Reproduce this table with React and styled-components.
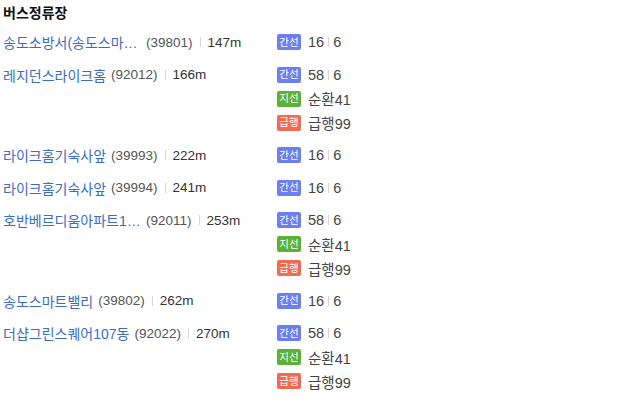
import React from "react";
import styled, { createGlobalStyle } from "styled-components";

const Global = createGlobalStyle`
  html, body { margin: 0; padding: 0; background: #fff; }
  body { font-family: "Liberation Sans", "Noto Sans CJK KR", sans-serif; }
`;

const Page = styled.div`
  padding: 0 3px;
  width: 632px;
`;

const Title = styled.h3`
  margin: 0 0 4px;
  height: 26px;
  line-height: 26px;
  font-size: 14px;
  font-weight: bold;
  color: #111;
`;

const List = styled.ul`
  list-style: none;
  margin: 0;
  padding: 0;
`;

const Stop = styled.li`
  display: grid;
  grid-template-columns: 274px 1fr;
  margin-bottom: 8.5px;
`;

const StopLine = styled.div`
  display: flex;
  align-items: center;
  height: 24px;
  font-size: 13.5px;
  white-space: nowrap;
`;

const Name = styled.a`
  display: block;
  max-width: 138px;
  overflow: hidden;
  text-overflow: ellipsis;
  white-space: nowrap;
  font-size: 14px;
  color: #3a6cc6;
  text-decoration: none;
  margin-right: 5px;
`;

const Code = styled.span`
  color: #555;
`;

const Sep = styled.span`
  display: inline-block;
  width: 1px;
  height: 10px;
  background: #d6d6d6;
  margin: 0 ${(p) => p.$gap || 6}px;
`;

const Dist = styled.span`
  color: #333;
`;

const Routes = styled.div`
  display: flex;
  flex-direction: column;
`;

const RouteLine = styled.div`
  display: flex;
  align-items: center;
  height: 24px;
  gap: 7px;
`;

const colors = { 간선: "#6c7ef0", 지선: "#5bb236", 급행: "#f06b50" };

const Badge = styled.span`
  display: inline-flex;
  align-items: center;
  justify-content: center;
  width: 24px;
  height: 16px;
  border-radius: 2px;
  background: ${(p) => colors[p.$kind]};
  color: #fff;
  font-size: 10.5px;
  font-family: "Noto Sans CJK KR", sans-serif;
  line-height: 1;
`;

const Nums = styled.span`
  display: flex;
  align-items: center;
  font-size: 14.5px;
  color: #444;
`;

const stops = [
  { name: "송도소방서(송도스마트밸리)", code: "39801", dist: "147m", routes: [["간선", ["16", "6"]]] },
  {
    name: "레지던스라이크홈",
    code: "92012",
    dist: "166m",
    routes: [["간선", ["58", "6"]], ["지선", ["순환41"]], ["급행", ["급행99"]]],
  },
  { name: "라이크홈기숙사앞", code: "39993", dist: "222m", routes: [["간선", ["16", "6"]]] },
  { name: "라이크홈기숙사앞", code: "39994", dist: "241m", routes: [["간선", ["16", "6"]]] },
  {
    name: "호반베르디움아파트1단지",
    code: "92011",
    dist: "253m",
    routes: [["간선", ["58", "6"]], ["지선", ["순환41"]], ["급행", ["급행99"]]],
  },
  { name: "송도스마트밸리", code: "39802", dist: "262m", routes: [["간선", ["16", "6"]]] },
  {
    name: "더샵그린스퀘어107동",
    code: "92022",
    dist: "270m",
    routes: [["간선", ["58", "6"]], ["지선", ["순환41"]], ["급행", ["급행99"]]],
  },
];

export default function App() {
  return (
    <Page>
      <Global />
      <Title>버스정류장</Title>
      <List>
        {stops.map((s, i) => (
          <Stop key={i}>
            <StopLine>
              <Name href="#" title={s.name}>{s.name}</Name>
              <Code>({s.code})</Code>
              <Sep $gap={7} />
              <Dist>{s.dist}</Dist>
            </StopLine>
            <Routes>
              {s.routes.map(([kind, nums]) => (
                <RouteLine key={kind}>
                  <Badge $kind={kind}>{kind}</Badge>
                  <Nums>
                    {nums.map((n, j) => (
                      <React.Fragment key={j}>
                        {j > 0 && <Sep $gap={4} />}
                        {n}
                      </React.Fragment>
                    ))}
                  </Nums>
                </RouteLine>
              ))}
            </Routes>
          </Stop>
        ))}
      </List>
    </Page>
  );
}
